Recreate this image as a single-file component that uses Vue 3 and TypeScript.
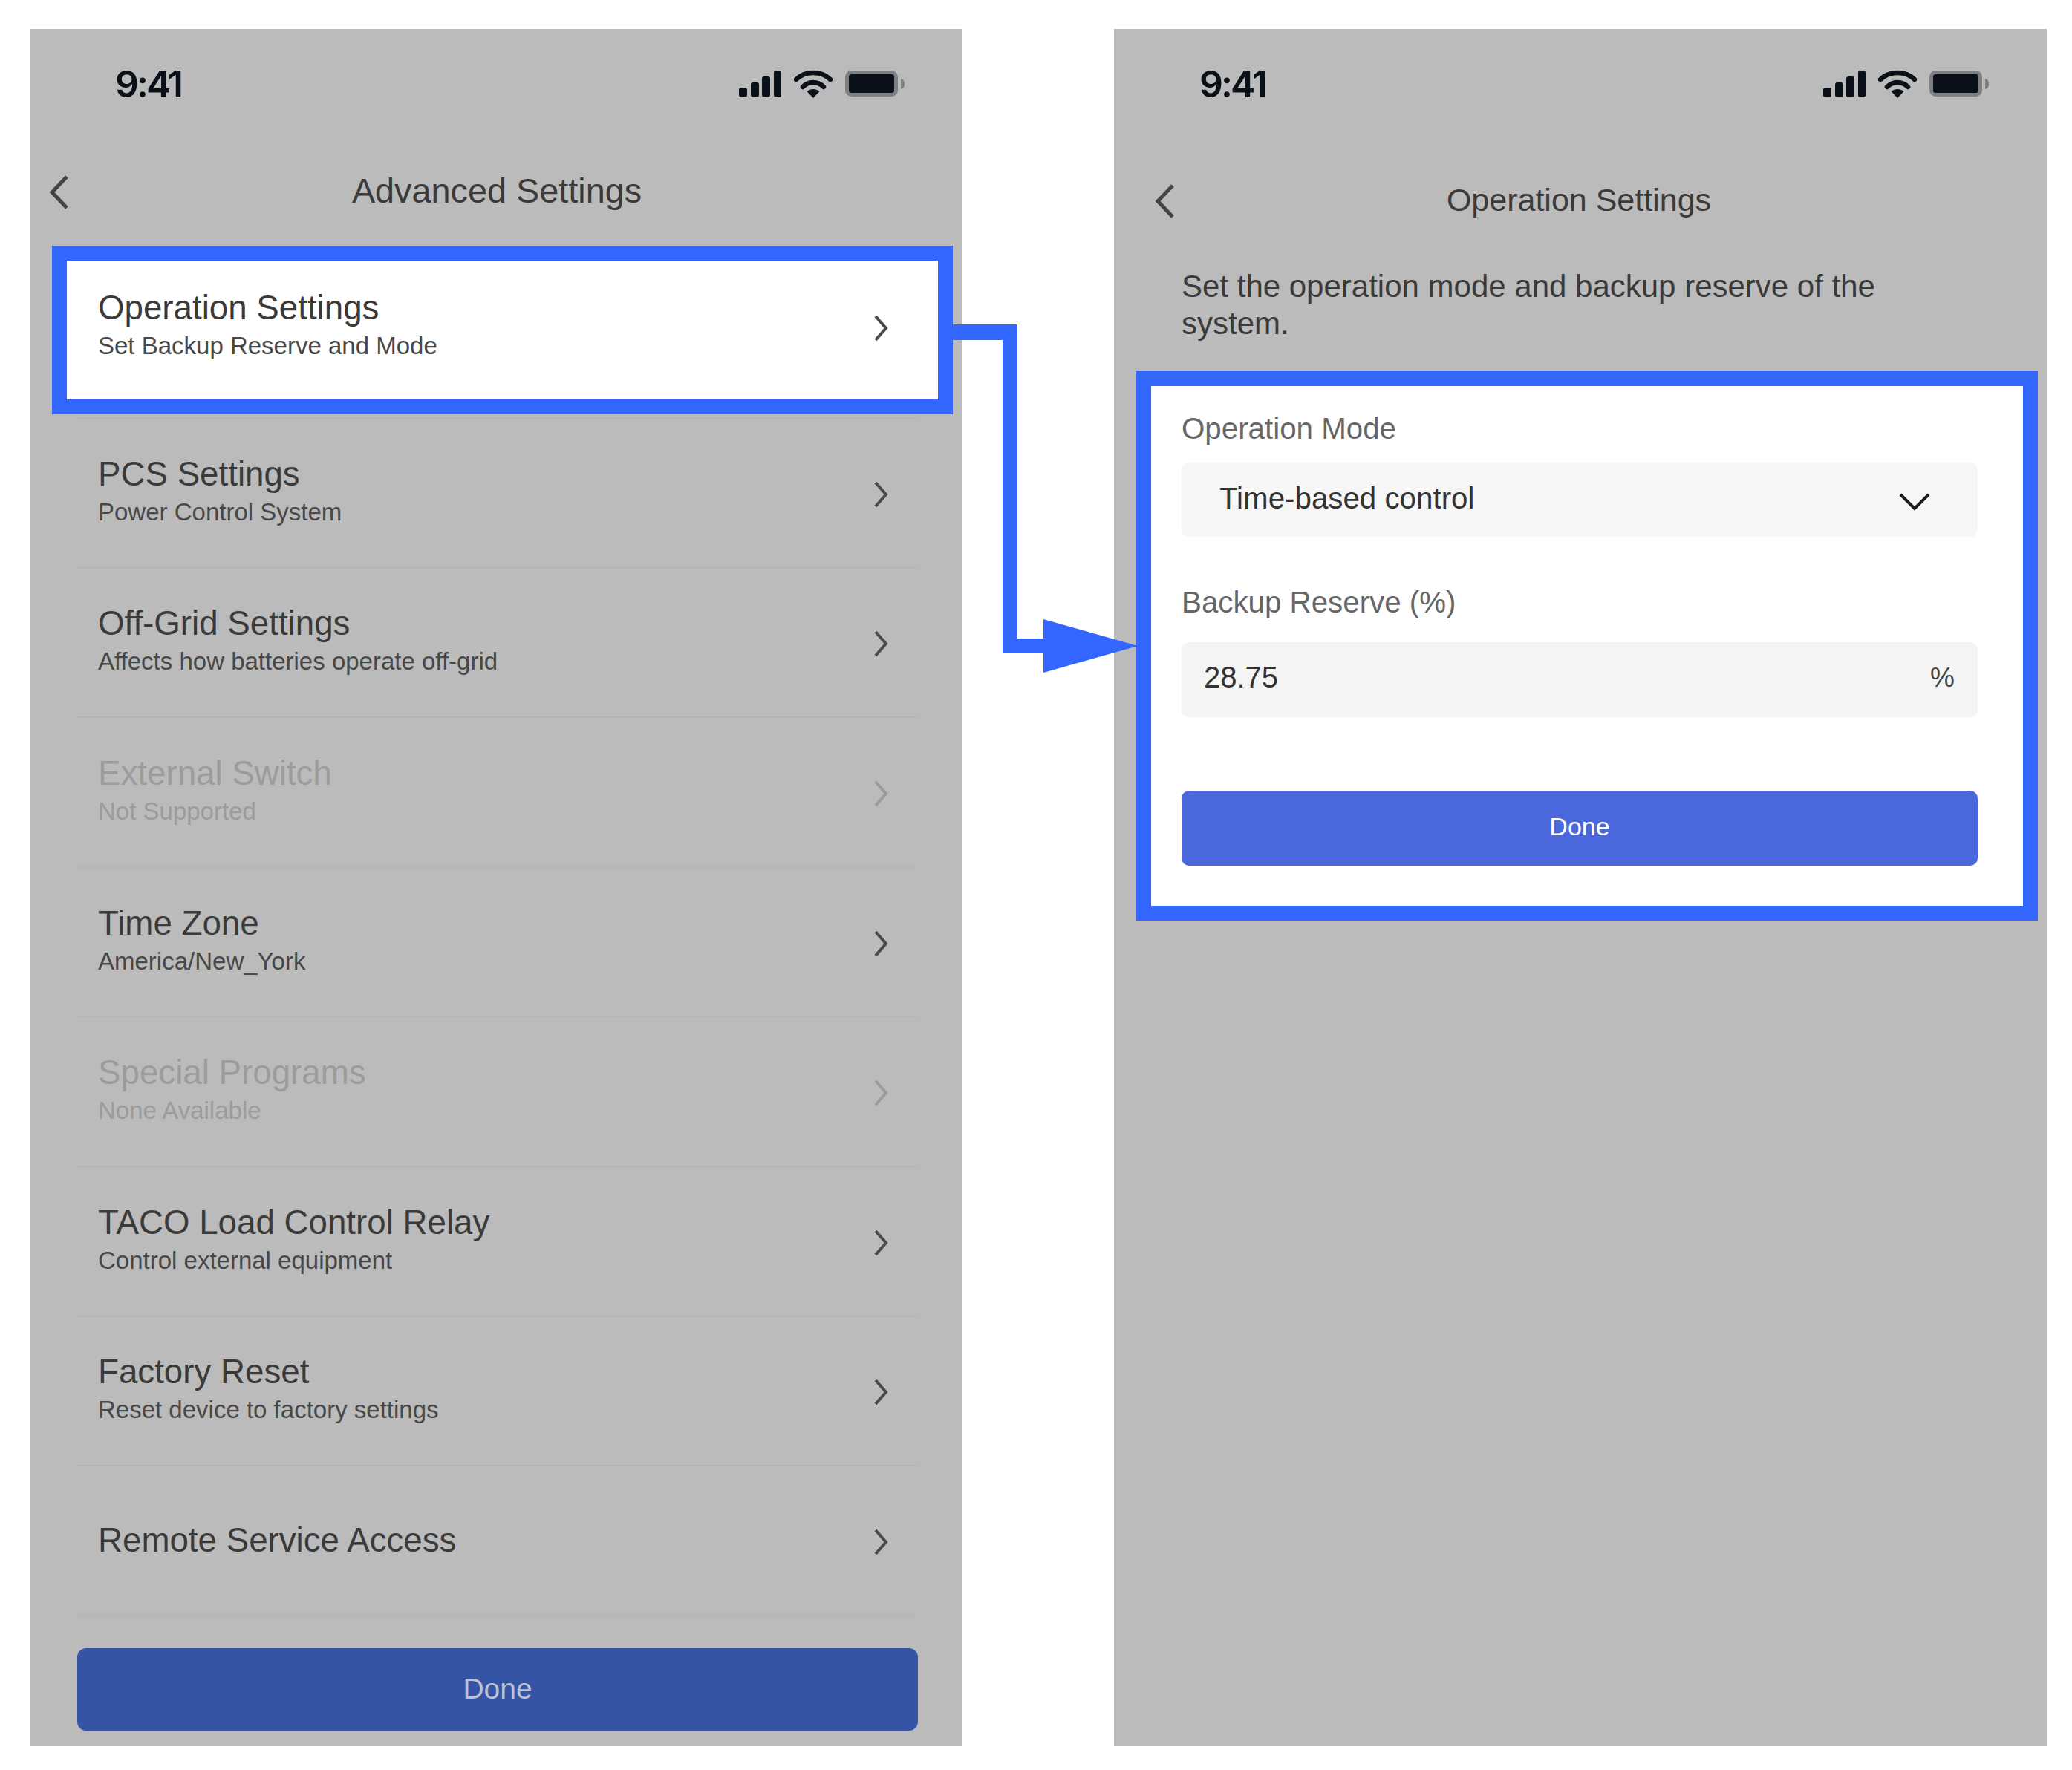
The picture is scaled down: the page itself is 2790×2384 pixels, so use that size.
<script setup lang="ts">
interface Row {
  title: string;
  sub?: string;
  off?: boolean;
}

const rows: Row[] = [
  { title: 'Operation Settings', sub: 'Set Backup Reserve and Mode' },
  { title: 'PCS Settings', sub: 'Power Control System' },
  { title: 'Off-Grid Settings', sub: 'Affects how batteries operate off-grid' },
  { title: 'External Switch', sub: 'Not Supported', off: true },
  { title: 'Time Zone', sub: 'America/New_York' },
  { title: 'Special Programs', sub: 'None Available', off: true },
  { title: 'TACO Load Control Relay', sub: 'Control external equipment' },
  { title: 'Factory Reset', sub: 'Reset device to factory settings' },
  { title: 'Remote Service Access' },
];
</script>

<template>
  <div class="page">
    <section v-for="screen in ['list', 'form']" :key="screen" class="phone" :class="screen">
      <div class="status">
        <span class="time">9:41</span>
        <div class="status-icons">
          <svg width="57" height="36" viewBox="0 0 57 36" fill="#0a1018">
            <rect x="0" y="23" width="11" height="13" rx="3" />
            <rect x="16" y="16" width="11" height="20" rx="3" />
            <rect x="31" y="8" width="11" height="28" rx="3" />
            <rect x="47" y="0" width="10" height="36" rx="3" />
          </svg>
          <svg width="52" height="38" viewBox="0 0 52 38" fill="none" stroke="#0a1018" stroke-width="6.5">
            <path d="M3 13 C15 1 37 1 49 13" stroke-linecap="round" />
            <path d="M12 23 C20 15 32 15 40 23" stroke-linecap="round" />
            <path d="M17.5 29 C23 25 29 25 34.500 29 L26 38 Z" fill="#0a1018" stroke="none" />
          </svg>
          <svg width="80" height="36" viewBox="0 0 80 36">
            <rect x="2.500" y="2.500" width="66" height="30" rx="6" fill="#0a1018" stroke="#7e7f80" stroke-width="5" />
            <path d="M75 11 C79 12 80 15 80 18 C80 21 79 24 75 25 Z" fill="#7e7f80" />
          </svg>
        </div>
      </div>

      <template v-if="screen === 'list'">
        <div class="nav">
          <svg class="back" width="27" height="46" viewBox="0 0 27 46" fill="none" stroke="#444" stroke-width="5">
            <path d="M24 2 L4 23 L24 44" />
          </svg>
          <h1>Advanced Settings</h1>
        </div>
        <div class="rows">
          <div v-for="row in rows" :key="row.title" class="row" :class="{ off: row.off }">
            <div class="row-text">
              <div class="row-title">{{ row.title }}</div>
              <div v-if="row.sub" class="row-sub">{{ row.sub }}</div>
            </div>
            <svg class="chev" width="20" height="36" viewBox="0 0 20 36" fill="none" stroke="currentColor" stroke-width="4">
              <path d="M3 2 L17 18 L3 34" />
            </svg>
          </div>
        </div>
        <button class="done-list">Done</button>
      </template>

      <template v-else>
        <div class="nav">
          <svg class="back" width="27" height="46" viewBox="0 0 27 46" fill="none" stroke="#444" stroke-width="5">
            <path d="M24 2 L4 23 L24 44" />
          </svg>
          <h1>Operation Settings</h1>
        </div>
        <p class="desc">Set the operation mode and backup reserve of the system.</p>
        <div class="card">
          <label>Operation Mode</label>
          <div class="select">
            <span>Time-based control</span>
            <svg width="42" height="25" viewBox="0 0 42 25" fill="none" stroke="#1c1c1c" stroke-width="4">
              <path d="M2 3 L21 22 L40 3" />
            </svg>
          </div>
          <label class="second">Backup Reserve (%)</label>
          <div class="input">
            <span>28.75</span>
            <span class="unit">%</span>
          </div>
          <button class="done-form">Done</button>
        </div>
      </template>
    </section>

    <svg class="connector" width="2790" height="2384" viewBox="0 0 2790 2384" fill="#3366ff">
      <path d="M1283 437 H1370 V860 H1405 V834 L1532 870 L1405 906 V880 H1350 V458 H1283 Z" />
    </svg>
  </div>
</template>

<style>
html,
body {
  background: #fff;
}
</style>

<style scoped>
.page {
  position: relative;
  display: flex;
  gap: 204px;
  width: 2790px;
  height: 2384px;
  padding: 39px 0 0 40px;
  box-sizing: border-box;
  font-family: "Liberation Sans", Arial, sans-serif;
  color: #3a3a3a;
}

.phone {
  display: flex;
  flex-direction: column;
  width: 1256px;
  height: 2313px;
  background: #bbbbbb;
}

.status {
  display: flex;
  align-items: center;
  justify-content: space-between;
  height: 148px;
  flex: none;
  padding: 0 78px 0 115px;
  box-sizing: border-box;
}

.time {
  font-family: Inter, sans-serif;
  font-size: 50px;
  font-weight: 600;
  letter-spacing: -3px;
  color: #0a1018;
}

.status-icons {
  display: flex;
  align-items: center;
  gap: 17px;
}

.nav {
  display: flex;
  align-items: center;
  justify-content: center;
  position: relative;
  height: 140px;
  flex: none;
}

.form .nav {
  height: 164px;
}

.nav h1 {
  margin: 0 0 1px 2px;
  font-size: 46.800px;
  font-weight: 400;
}

.form .nav h1 {
  font-size: 43px;
  margin: 0 4px 0 0;
}

.back {
  position: absolute;
  left: 26px;
  top: 49px;
}

.form .back {
  left: 55px;
  top: 61px;
}

.rows {
  margin: 13px 60px 0 64px;
}

.row {
  position: relative;
  display: flex;
  align-items: center;
  justify-content: space-between;
  height: 201.6px;
  padding: 0 40px 0 28px;
  box-sizing: border-box;
  border-bottom: 2px solid #b6b6b6;
  color: #4a4a4a;
}

.row:first-child {
  height: 224px;
  padding-bottom: 23px;
}

.row:first-child::before {
  content: "";
  position: absolute;
  left: -34px;
  top: -9px;
  width: 1213px;
  height: 227px;
  box-sizing: border-box;
  border: 20px solid #3366ff;
  background: #fff;
}

.row-text {
  position: relative;
}

.chev {
  position: relative;
  top: 2px;
}

.row-title {
  font-size: 45.7px;
  line-height: 52px;
  color: #3a3a3a;
}

.row-sub {
  font-size: 33px;
  line-height: 50px;
  color: #484848;
}

.row.off .row-title,
.row.off .row-sub,
.row.off .chev {
  color: #9c9c9c;
}

.done-list,
.done-form {
  display: block;
  border: none;
  font-family: inherit;
  padding: 0;
}

.done-list {
  width: 1132px;
  height: 111px;
  margin: 43px 64px 0;
  border-radius: 12px;
  background: #3554a5;
  color: #bcc2d0;
  font-size: 39px;
}

.desc {
  margin: 10px 100px 0 91px;
  font-size: 42px;
  line-height: 50px;
}

.card {
  margin: 39px 12px 0 30px;
  padding: 33px 61px 54px 41px;
  border: 20px solid #3366ff;
  background: #fff;
  box-sizing: border-box;
}

.card label {
  display: block;
  font-size: 40.3px;
  line-height: 50px;
  color: #666;
}

.card label.second {
  margin-top: 64px;
}

.select,
.input {
  display: flex;
  align-items: center;
  justify-content: space-between;
  border-radius: 10px;
  box-sizing: border-box;
}

.select {
  height: 100px;
  margin-top: 20px;
  padding: 0 64px 3px 51px;
  background: #f6f6f6;
  font-size: 40.3px;
  color: #333;
}

.select svg {
  margin-top: 7px;
}

.input {
  height: 101px;
  margin-top: 28px;
  padding: 0 31px 6px 30px;
  background: #f4f4f4;
  font-size: 40px;
  color: #333;
}

.unit {
  font-size: 37px;
  color: #444;
}

.done-form {
  width: 100%;
  height: 101px;
  margin-top: 99px;
  padding-bottom: 4px;
  border-radius: 10px;
  background: #4a67dc;
  color: #fff;
  font-size: 34px;
}

.connector {
  position: absolute;
  left: 0;
  top: 0;
  pointer-events: none;
}
</style>
